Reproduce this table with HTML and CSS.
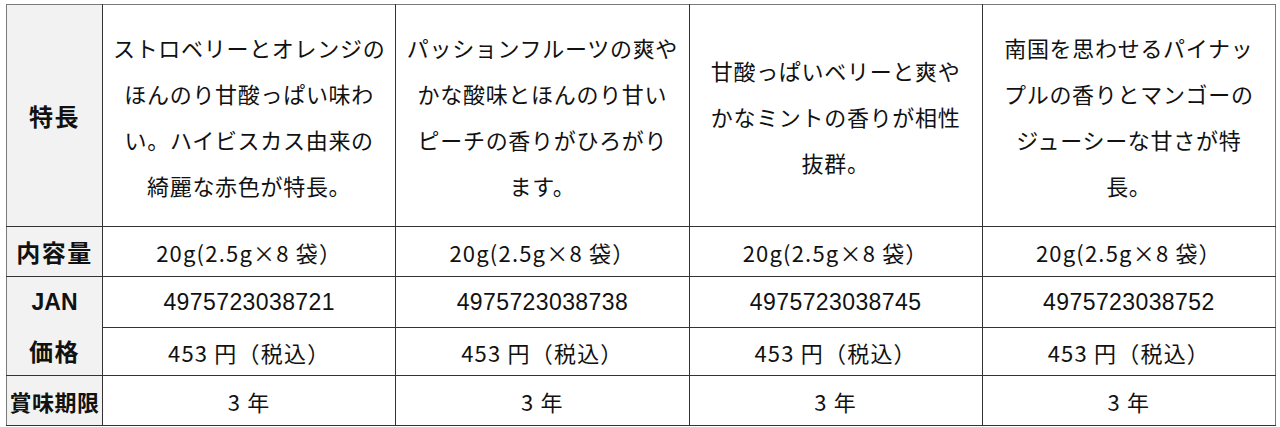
FILE: index.html
```html
<!DOCTYPE html>
<html lang="ja">
<head>
<meta charset="utf-8">
<title>商品比較表</title>
<link rel="stylesheet" href="styles.css">
</head>
<body>
<table class="spec">
  <colgroup>
    <col class="c-label">
    <col class="c-item">
    <col class="c-item">
    <col class="c-item">
    <col class="c-item c-last">
  </colgroup>
  <tbody>
    <tr class="r-feature">
      <th class="label">特長</th>
      <td class="desc">ストロベリーとオレンジの<br>ほんのり甘酸っぱい味わ<br>い。ハイビスカス由来の<br>綺麗な赤色が特長。</td>
      <td class="desc">パッションフルーツの爽や<br>かな酸味とほんのり甘い<br>ピーチの香りがひろがり<br>ます。</td>
      <td class="desc">甘酸っぱいベリーと爽や<br>かなミントの香りが相性<br>抜群。</td>
      <td class="desc">南国を思わせるパイナッ<br>プルの香りとマンゴーの<br>ジューシーな甘さが特<br>長。</td>
    </tr>
    <tr class="r-vol">
      <th class="label">内容量</th>
      <td class="val">20g(2.5g×8 袋）</td>
      <td class="val">20g(2.5g×8 袋）</td>
      <td class="val">20g(2.5g×8 袋）</td>
      <td class="val">20g(2.5g×8 袋）</td>
    </tr>
    <tr class="r-jan">
      <th class="label label-latin join-down">JAN</th>
      <td class="val num">4975723038721</td>
      <td class="val num">4975723038738</td>
      <td class="val num">4975723038745</td>
      <td class="val num">4975723038752</td>
    </tr>
    <tr class="r-price">
      <th class="label join-up">価格</th>
      <td class="val">453 円（税込）</td>
      <td class="val">453 円（税込）</td>
      <td class="val">453 円（税込）</td>
      <td class="val">453 円（税込）</td>
    </tr>
    <tr class="r-term">
      <th class="label label-small">賞味期限</th>
      <td class="val">3 年</td>
      <td class="val">3 年</td>
      <td class="val">3 年</td>
      <td class="val">3 年</td>
    </tr>
  </tbody>
</table>
</body>
</html>
```

FILE: styles.css
```css
html, body {
  background: #ffffff;
}

body {
  margin: 4px 0 0 6px;
  color: #111111;
  font-family: "Noto Sans CJK JP", "Noto Sans", sans-serif;
}

.spec {
  border-collapse: collapse;
  table-layout: fixed;
  width: 1270px;
  border: 1px solid #7a7a7a;
}

.c-label { width: 96px; }
.c-item { width: 293px; }

.spec th,
.spec td {
  border: 1px solid #333333;
  padding: 0;
  text-align: center;
  vertical-align: middle;
}

.spec tr:first-child th,
.spec tr:first-child td {
  border-top-color: #7a7a7a;
}

.spec th:first-child {
  border-left-color: #7a7a7a;
}

.spec td:last-child {
  border-right-color: #7a7a7a;
}

.label {
  background: #f2f2f2;
  font-weight: 700;
  font-size: 24px;
  letter-spacing: 1.5px;
  line-height: 1;
}

.label-latin {
  font-family: "Liberation Sans", "Noto Sans CJK JP", sans-serif;
  font-size: 23px;
  letter-spacing: 0;
}

.label-small {
  font-size: 22px;
  letter-spacing: 0.5px;
  white-space: nowrap;
}

.join-down { border-bottom: none !important; }
.join-up { border-top: none !important; }

.desc {
  font-size: 22px;
  letter-spacing: 0.7px;
  line-height: 46px;
}

.val {
  font-size: 22px;
  letter-spacing: 1.2px;
  line-height: 1;
}

.num {
  font-family: "Liberation Sans", "Noto Sans CJK JP", sans-serif;
  font-size: 23px;
  letter-spacing: 0.4px;
}

.r-feature { height: 222px; }
.r-vol { height: 50px; }
.r-jan { height: 51px; }
.r-price { height: 48px; }
.r-term { height: 50px; }
```
